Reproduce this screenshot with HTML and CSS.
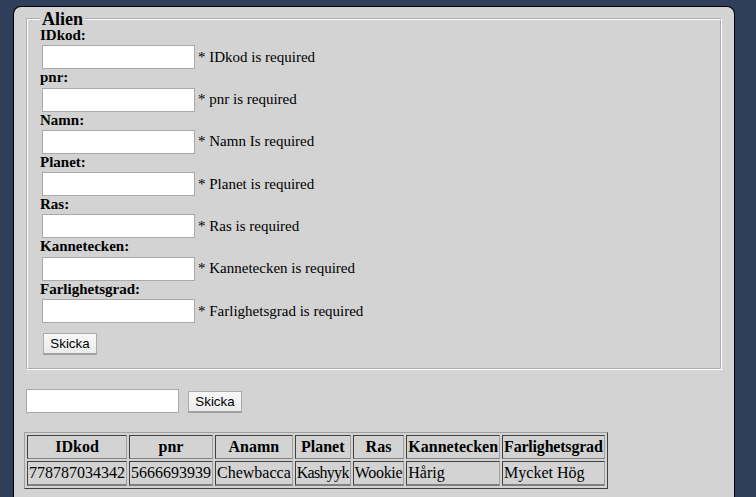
FILE: index.html
```html
<!DOCTYPE html>
<html>
<head>
<meta charset="utf-8">
<link rel="stylesheet" href="styles.css">
</head>
<body>
<div class="page">
  <form class="alien-form">
    <fieldset class="fs">
      <legend class="lg">Alien</legend>
      <div class="lbl">IDkod:</div>
      <div class="row"><input class="tb" type="text"><span class="req">* IDkod is required</span></div>
      <div class="lbl">pnr:</div>
      <div class="row"><input class="tb" type="text"><span class="req">* pnr is required</span></div>
      <div class="lbl">Namn:</div>
      <div class="row"><input class="tb" type="text"><span class="req">* Namn Is required</span></div>
      <div class="lbl">Planet:</div>
      <div class="row"><input class="tb" type="text"><span class="req">* Planet is required</span></div>
      <div class="lbl">Ras:</div>
      <div class="row"><input class="tb" type="text"><span class="req">* Ras is required</span></div>
      <div class="lbl">Kannetecken:</div>
      <div class="row"><input class="tb" type="text"><span class="req">* Kannetecken is required</span></div>
      <div class="lbl">Farlighetsgrad:</div>
      <div class="row"><input class="tb" type="text"><span class="req">* Farlighetsgrad is required</span></div>
      <div class="btnrow"><button class="btn" type="button">Skicka</button></div>
    </fieldset>
  </form>
  <div class="search">
    <input class="tb tb2" type="text"><button class="btn" type="button">Skicka</button>
  </div>
  <table class="grid">
    <tr>
      <th>IDkod</th><th>pnr</th><th>Anamn</th><th>Planet</th><th>Ras</th><th>Kannetecken</th><th class="tight-h">Farlighetsgrad</th>
    </tr>
    <tr>
      <td>778787034342</td><td>5666693939</td><td>Chewbacca</td><td class="tight">Kashyyk</td><td class="tight2">Wookie</td><td>Hårig</td><td>Mycket Hög</td>
    </tr>
  </table>
</div>
</body>
</html>
```
FILE: styles.css
```css
html, body {
  margin: 0;
  padding: 0;
  background: #2e3e5b;
  font-family: "Liberation Serif", "Times New Roman", serif;
  color: #000;
}
.page {
  margin: 6px 0 0 13px;
  width: 722px;
  height: 491px;
  background: #d3d3d3;
  border: 1px solid #000;
  border-bottom: none;
  border-radius: 8px 8px 0 0;
  padding: 0 12px;
  box-sizing: border-box;
  overflow: hidden;
}
.alien-form {
  margin: 0;
  padding-top: 4px;
}
.fs {
  margin: 0;
  border: 2px groove #fff;
  padding: 0 12px 13px 12px;
  font-size: 15px;
}
.lg {
  font-size: 18px;
  font-weight: bold;
  line-height: 16px;
  padding: 0 2px;
}
.lbl {
  font-weight: bold;
  line-height: 16.3px;
}
.row {
  display: flex;
  align-items: center;
  height: 26px;
}
.tb {
  margin: 2px 3px 0 2px;
  width: 153px;
  height: 24px;
  box-sizing: border-box;
  border: 1px solid #a9a9a9;
  background: #fff;
  padding: 0 2px;
  font: 13px Arial, "Liberation Sans", sans-serif;
}
.req {
  line-height: 17px;
  padding-top: 2px;
}
.btnrow {
  padding-top: 10px;
  padding-left: 3px;
  height: 22px;
}
.btn {
  height: 22px;
  padding: 0 6px;
  margin: 0;
  font: 13.33px "Liberation Sans", Arial, sans-serif;
  color: #000;
  background: linear-gradient(#f7f7f7, #ececec);
  border: 1px solid #acacac;
  border-bottom: 2px solid #a0a0a0;
  border-radius: 0;
  width: 54px;
  box-sizing: border-box;
}
.search {
  display: flex;
  align-items: center;
  margin-top: 19px;
  height: 24px;
}
.tb2 {
  margin: 0 9px 0 0;
}
.search .btn {
  margin-top: 1px;
}
.grid {
  margin: 19px 0 0 -2px;
  border-collapse: separate;
  border-spacing: 2px;
  border: 1px solid;
  border-color: #a0a0a0 #404040 #404040 #a0a0a0;
  font-size: 16px;
}
.grid th, .grid td {
  border: 1px solid;
  border-color: #404040 #a0a0a0 #808080 #404040;
  padding: 2px 1px 2px 1px;
  line-height: 18px;
}
.grid td {
  border-bottom: 2px solid #808080;
  padding-bottom: 2px;
  text-align: left;
}
.grid td.tight {
  letter-spacing: -0.7px;
}
.grid td.tight2 {
  letter-spacing: -0.3px;
}
.grid th.tight-h {
  letter-spacing: -0.2px;
}
.grid th {
  font-weight: bold;
  text-align: center;
}
```
